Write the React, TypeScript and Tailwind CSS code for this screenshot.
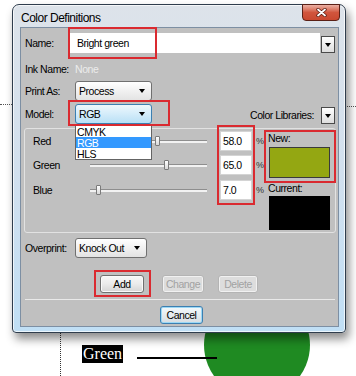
import React from 'react';

const FONT = "font-['Liberation_Sans',Arial,sans-serif]";

const channels = [
  { name: 'Red', value: 58, gap: '' },
  { name: 'Green', value: 65, gap: 'mt-[4px]' },
  { name: 'Blue', value: 7, gap: 'mt-[5px]' },
];

function Arrow() {
  return (
    <span className="block w-0 h-0 border-l-[3px] border-r-[3px] border-t-[4px] border-l-transparent border-r-transparent border-t-black" />
  );
}

function DropSquare() {
  return (
    <div className="flex items-center justify-center w-[14px] h-[17px] border border-[#4a4a4a] bg-gradient-to-b from-white to-[#dedede]">
      <Arrow />
    </div>
  );
}

function Combo({ value, width, open }: { value: string; width: string; open?: boolean }) {
  return (
    <div
      className={`${width} h-[20px] flex items-center justify-between pl-[3px] pr-[6px] rounded-[3px] border ${
        open
          ? 'border-[#3c7fb1] bg-gradient-to-b from-[#eef8fd] to-[#b9e0f6]'
          : 'border-[#707070] bg-gradient-to-b from-white to-[#e3e3e3]'
      }`}
    >
      <span>{value}</span>
      <Arrow />
    </div>
  );
}

function Slider({ value }: { value: number }) {
  const left = (value * 117) / 100 - 2.5;
  return (
    <div className="relative w-[117px] h-[3px] border-t border-[#8e8e8e] bg-[#f2f2f2]">
      <div
        className="absolute -top-[5px] w-[5px] h-[10px] rounded-[1px] border border-[#7a7a7a] bg-gradient-to-b from-white to-[#d8d8d8]"
        style={{ left: `${left}px` }}
      />
    </div>
  );
}

function Btn({ label, width, disabled, focus }: { label: string; width: string; disabled?: boolean; focus?: boolean }) {
  let look = 'border-[#707070] bg-gradient-to-b from-[#f7f7f7] via-[#ebebeb] to-[#d5d5d5] text-black shadow-[inset_0_0_0_1px_#fafafa]';
  if (disabled) look = 'border-[#b4b4b4] bg-[#dddddd] text-[#a2a2a2] shadow-[inset_0_0_0_1px_#f1f1f1]';
  if (focus) look = 'border-[#3c7fb1] bg-gradient-to-b from-[#f4f9fc] to-[#d7dde2] text-black shadow-[inset_0_0_0_1px_#9bd8f5]';
  return (
    <div className={`${width} h-[18px] flex items-center justify-center rounded-[3px] border ${look}`}>{label}</div>
  );
}

function Dialog() {
  return (
    <div className="relative z-10 ml-[12px] mt-[4px] w-[334px] h-[329px] flex flex-col rounded-t-[7px] rounded-b-[4px] border border-[#2f3d4d] bg-gradient-to-b from-[#dde3ea] via-[#d2e0ee] to-[#c0dff5] shadow-[inset_0_0_0_1px_rgba(255,255,255,0.7),3px_6px_10px_rgba(0,0,0,0.45)]">
      <div className="flex h-[22px]">
        <span className="pl-[8px] pt-[7px] text-[12px] leading-[13px] tracking-[-0.5px] text-black">Color Definitions</span>
        <div className="ml-auto mr-[5px] -mt-[1px] w-[38px] h-[17px] flex items-center justify-center rounded-b-[4px] border border-[#5a2016] bg-gradient-to-b from-[#eab0a3] via-[#d1553d] to-[#c9482f]">
          <svg width="11" height="9" viewBox="0 0 11 9">
            <path d="M2 1.5 L9 7.5 M9 1.5 L2 7.5" stroke="#5b1d12" strokeWidth="3.4" strokeLinecap="round" />
            <path d="M2 1.5 L9 7.5 M9 1.5 L2 7.5" stroke="#ffffff" strokeWidth="1.8" strokeLinecap="round" />
          </svg>
        </div>
      </div>

      <div className="relative ml-[7px] w-[319px] h-[300px] flex flex-col pl-[4px] border border-[#7d8fa3] bg-[#c0c0c0] text-[10.5px] leading-none tracking-[-0.45px] text-black">
        <div className="flex items-center h-[20px] mt-[5px]">
          <span className="w-[45px]">Name:</span>
          <div className="w-[250px] h-[20px] flex items-center pl-[7px] bg-white">Bright green</div>
          <div className="ml-[1px] self-end">
            <DropSquare />
          </div>
        </div>

        <div className="flex items-center h-[16px] mt-[8px]">
          <span className="w-[50px] whitespace-nowrap">Ink Name:</span>
          <span className="text-[#ececec]">None</span>
        </div>

        <div className="flex items-center h-[20px] mt-[4px]">
          <span className="w-[50px]">Print As:</span>
          <Combo value="Process" width="w-[77px]" />
        </div>

        <div className="flex items-center h-[20px] mt-[3px] pr-[3px]">
          <span className="w-[50px]">Model:</span>
          <Combo value="RGB" width="w-[77px]" open />
          <span className="ml-auto mt-[3px]">Color Libraries:</span>
          <div className="ml-[7px] self-end">
            <DropSquare />
          </div>
        </div>

        <div className="flex -ml-[1px] mt-[4px] w-[312px] h-[105px] rounded-[3px] border border-[#e2e2e2]">
          <div className="flex flex-col w-[243px] pt-[2px]">
            {channels.map((c) => (
              <div key={c.name} className={`flex items-center h-[20px] ${c.gap}`}>
                <span className="w-[65px] pl-[8px]">{c.name}</span>
                <Slider value={c.value} />
                <div className="ml-[13px] w-[32px] h-[20px] flex items-center pl-[2px] bg-white border border-[#d4d4d4]">
                  {c.value.toFixed(1)}
                </div>
                <span className="ml-[4px] text-[9px] text-[#333]">%</span>
              </div>
            ))}
          </div>
          <div className="flex flex-col">
            <span className="mt-[3px] h-[12px] leading-[12px]">New:</span>
            <div className="mt-[3px] ml-[1px] w-[61px] h-[31px] border border-[#3a3a3a] bg-[#94a712]" />
            <span className="mt-[4px] h-[12px] leading-[12px]">Current:</span>
            <div className="mt-[2px] ml-[1px] w-[61px] h-[34px] bg-black" />
          </div>
        </div>

        <div className="flex items-center h-[20px] mt-[5px]">
          <span className="w-[50px]">Overprint:</span>
          <Combo value="Knock Out" width="w-[72px]" />
        </div>

        <div className="flex mt-[17px] ml-[75px]">
          <Btn label="Add" width="w-[44px]" />
          <div className="ml-[18px]">
            <Btn label="Change" width="w-[42px]" disabled />
          </div>
          <div className="ml-[14px]">
            <Btn label="Delete" width="w-[40px]" disabled />
          </div>
        </div>

        <div className="mt-[6px] w-[310px] h-[1px] bg-[#e9e9e9]" />

        <div className="flex justify-center mt-[6px]">
          <Btn label="Cancel" width="w-[43px]" focus />
        </div>

        <div className="absolute left-[54px] top-[97px] w-[77px] h-[35px] flex flex-col border border-[#646464] bg-white">
          <span className="h-[11px] pl-[1px] pt-[1px]">CMYK</span>
          <span className="h-[11px] pl-[1px] pt-[1px] bg-[#3399ff] text-white">RGB</span>
          <span className="h-[11px] pl-[1px] pt-[1px]">HLS</span>
        </div>

        <div className="absolute left-[47px] -top-[1px] w-[89px] h-[32px] border-2 border-[#da2a30]" />
        <div className="absolute left-[47px] top-[72px] w-[102px] h-[26px] border-2 border-[#da2a30]" />
        <div className="absolute left-[196px] top-[97px] w-[38px] h-[80px] border-2 border-[#da2a30]" />
        <div className="absolute left-[243px] top-[102px] w-[72px] h-[53px] border-2 border-[#da2a30]" />
        <div className="absolute left-[73px] top-[242px] w-[57px] h-[27px] border-2 border-[#da2a30]" />
      </div>
    </div>
  );
}

export default function App() {
  return (
    <div className={`relative w-[356px] h-[376px] overflow-hidden bg-white ${FONT}`}>
      <div className="absolute left-0 top-[104px] w-[12px] border-t border-dotted border-[#555]" />
      <div className="absolute left-[347px] top-[106px] w-[9px] border-t border-dotted border-[#555]" />
      <div className="absolute left-[204px] top-[292px] w-[106px] h-[106px] rounded-full bg-[#1f8a22]" />

      <Dialog />

      <div className="relative flex h-[43px]">
        <div className="ml-[60px] -mt-[3px] border-l border-dotted border-[#333]" />
        <span className="ml-[21px] mt-[12px] self-start h-[18px] px-[1px] bg-black text-white text-[16px] leading-[18px] font-['Liberation_Serif',serif]">
          Green
        </span>
        <div className="ml-[14px] mt-[24px] w-[80px] h-[2px] bg-black" />
      </div>
    </div>
  );
}
